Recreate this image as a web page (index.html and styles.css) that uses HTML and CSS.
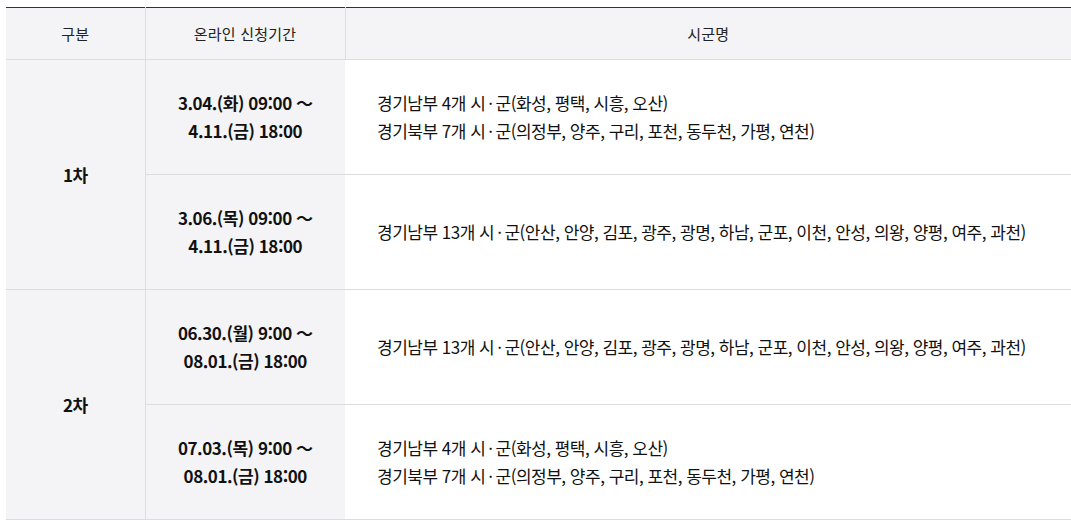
FILE: index.html
```html
<!DOCTYPE html>
<html lang="ko">
<head>
<meta charset="utf-8">
<link rel="stylesheet" href="styles.css">
</head>
<body>
<div class="wrap">
<table class="tbl">
  <colgroup>
    <col class="c1"><col class="c2"><col class="c3">
  </colgroup>
  <thead>
    <tr><th>구분</th><th>온라인 신청기간</th><th>시군명</th></tr>
  </thead>
  <tbody>
    <tr>
      <td class="round" rowspan="2">1차</td>
      <td class="date">3.04.(화) 09:00 ～<br>4.11.(금) 18:00</td>
      <td class="area">경기남부 4개 시<span class="dot">·</span>군(화성, 평택, 시흥, 오산)<br>경기북부 7개 시<span class="dot">·</span>군(의정부, 양주, 구리, 포천, 동두천, 가평, 연천)</td>
    </tr>
    <tr>
      <td class="date">3.06.(목) 09:00 ～<br>4.11.(금) 18:00</td>
      <td class="area">경기남부 13개 시<span class="dot">·</span>군(안산, 안양, 김포, 광주, 광명, 하남, 군포, 이천, 안성, 의왕, 양평, 여주, 과천)</td>
    </tr>
    <tr>
      <td class="round" rowspan="2">2차</td>
      <td class="date">06.30.(월) 9:00 ～<br>08.01.(금) 18:00</td>
      <td class="area">경기남부 13개 시<span class="dot">·</span>군(안산, 안양, 김포, 광주, 광명, 하남, 군포, 이천, 안성, 의왕, 양평, 여주, 과천)</td>
    </tr>
    <tr>
      <td class="date">07.03.(목) 9:00 ～<br>08.01.(금) 18:00</td>
      <td class="area">경기남부 4개 시<span class="dot">·</span>군(화성, 평택, 시흥, 오산)<br>경기북부 7개 시<span class="dot">·</span>군(의정부, 양주, 구리, 포천, 동두천, 가평, 연천)</td>
    </tr>
  </tbody>
</table>
</div>
</body>
</html>
```

FILE: styles.css
```css
html, body {
  margin: 0;
  padding: 0;
  background: #ffffff;
}
.wrap {
  padding: 7px 0 0 6px;
}
.tbl {
  width: 1065px;
  border-collapse: collapse;
  table-layout: fixed;
  font-family: "Noto Sans CJK KR", "Noto Sans", sans-serif;
  color: #111111;
  border-top: 1px solid #1b3558;
}
.c1 { width: 139px; }
.c2 { width: 200px; }
.c3 { width: auto; }
.tbl th {
  height: 51px;
  padding: 0;
  font-size: 15px;
  font-weight: 400;
  color: #222222;
  background: #f4f4f6;
  text-align: center;
  vertical-align: middle;
  border-bottom: 1px solid #dddddd;
  border-left: 1px solid #dddddd;
  letter-spacing: 0.2px;
}
.tbl th:first-child { border-left: 0; }
.tbl td {
  height: 114px;
  padding: 0;
  border-bottom: 1px solid #dddddd;
  border-left: 1px solid #dddddd;
  vertical-align: middle;
  font-size: 17px;
  line-height: 28px;
  letter-spacing: -0.5px;
}
.tbl td.round {
  border-left: 0;
  background: #f4f4f6;
  text-align: center;
  font-weight: 700;
}
.tbl td.date {
  background: #f4f4f6;
  text-align: center;
  font-weight: 700;
  letter-spacing: -0.45px;
}
.tbl td.area {
  padding-left: 32px;
  background: #ffffff;
  border-left: 0;
}
.dot {
  padding: 0 3px;
}
```
